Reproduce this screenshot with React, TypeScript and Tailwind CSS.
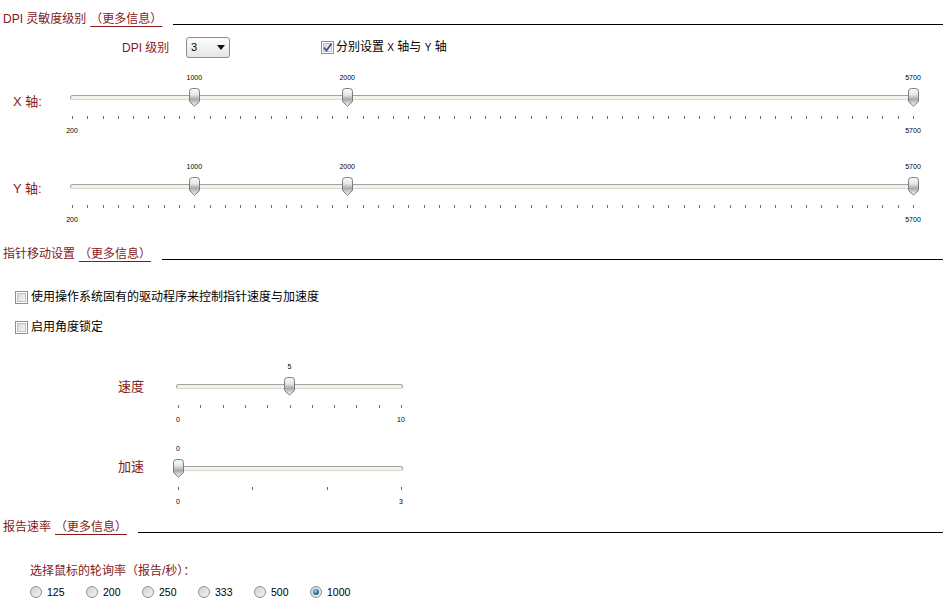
const RED = "text-[#861818]";

function Thumb({ left }: { left: number }) {
  return (
    <svg
      width="13"
      height="19"
      viewBox="0 0 13 19"
      className="absolute top-[16px]"
      style={{ left: left - 6.5 }}
    >
      <defs>
        <linearGradient id="thumbFill" x1="0" y1="0" x2="0" y2="1">
          <stop offset="0" stopColor="#fbfbfb" />
          <stop offset="0.35" stopColor="#e6e6e6" />
          <stop offset="0.62" stopColor="#a9a9ad" />
          <stop offset="0.85" stopColor="#dcdce0" />
          <stop offset="1" stopColor="#f4f4f4" />
        </linearGradient>
      </defs>
      <path
        d="M1.5 3.5 Q1.5 0.5 4.5 0.5 H8.5 Q11.5 0.5 11.5 3.5 V13.5 L6.5 18.2 L1.5 13.5 Z"
        fill="url(#thumbFill)"
        stroke="#7c7c80"
        strokeWidth="1"
      />
    </svg>
  );
}

function Slider({
  min,
  max,
  width,
  ticks,
  values,
  className,
}: {
  min: number;
  max: number;
  width: number;
  ticks: number;
  values: number[];
  className: string;
}) {
  const pos = (v: number) => ((v - min) / (max - min)) * width;
  return (
    <div className={"relative h-[64px] shrink-0 " + className}>
      {values.map((v) => (
        <span
          key={"l" + v}
          className="absolute top-[2px] -translate-x-1/2 text-[7px] leading-[8px] text-black"
          style={{ left: pos(v) }}
        >
          {v}
        </span>
      ))}
      <div className="absolute left-[-2px] right-[-2px] top-[23px] h-[5px] rounded-full border border-[#a3a3a3] border-b-[#d9d9d0] bg-[#f3f3ea]" />
      {values.map((v) => (
        <Thumb key={"t" + v} left={pos(v)} />
      ))}
      {Array.from({ length: ticks }).map((_, i) => (
        <div
          key={i}
          className="absolute top-[44px] h-[3px] w-px bg-[#6a6a6a]"
          style={{ left: (i / (ticks - 1)) * width }}
        />
      ))}
      <span className="absolute left-0 top-[55px] -translate-x-1/2 text-[7px] leading-[8px] text-black">
        {min}
      </span>
      <span
        className="absolute top-[55px] -translate-x-1/2 text-[7px] leading-[8px] text-black"
        style={{ left: width }}
      >
        {max}
      </span>
    </div>
  );
}

function SectionHeader({ title, className }: { title: string; className: string }) {
  return (
    <div className={"flex h-[16px] items-end pl-[3px] " + className}>
      <span className={"text-[12px] leading-[16px] " + RED}>{title}</span>
      <a
        href="#"
        className={"ml-[4px] text-[12px] leading-[16px] underline underline-offset-[3px] " + RED}
      >
        （更多信息）
      </a>
      <div className="mb-[2px] ml-[11px] h-px flex-1 bg-black" />
    </div>
  );
}

function Checkbox({ checked }: { checked?: boolean }) {
  return (
    <svg width="13" height="13" viewBox="0 0 13 13" className="shrink-0">
      <defs>
        <linearGradient id="cbFill" x1="0" y1="0" x2="1" y2="1">
          <stop offset="0" stopColor="#d6d6d6" />
          <stop offset="1" stopColor="#f7f7f7" />
        </linearGradient>
      </defs>
      <rect x="0.5" y="0.5" width="12" height="12" fill="#fff" stroke="#8f8f8f" />
      <rect x="2.5" y="2.5" width="8" height="8" fill="url(#cbFill)" stroke="#c2c2c2" />
      {checked && (
        <path d="M3 6.5 L5.5 9.5 L10.5 2.5" fill="none" stroke="#40569a" strokeWidth="1.8" />
      )}
    </svg>
  );
}

function Radio({ checked }: { checked?: boolean }) {
  return (
    <svg width="12" height="12" viewBox="0 0 12 12" className="shrink-0">
      <defs>
        <linearGradient id="rdFill" x1="0" y1="0" x2="1" y2="1">
          <stop offset="0" stopColor="#cfcfcf" />
          <stop offset="1" stopColor="#f6f6f6" />
        </linearGradient>
        <radialGradient id="rdDot" cx="0.4" cy="0.35" r="0.7">
          <stop offset="0" stopColor="#9fd6ef" />
          <stop offset="0.6" stopColor="#2d7fb0" />
          <stop offset="1" stopColor="#1a4d73" />
        </radialGradient>
      </defs>
      <circle cx="6" cy="6" r="5.5" fill="url(#rdFill)" stroke="#8e8f8f" />
      {checked && <circle cx="6" cy="6" r="3" fill="url(#rdDot)" />}
    </svg>
  );
}

export default function App() {
  return (
    <div
      className="h-[607px] w-[943px] overflow-hidden bg-white text-[12px] text-black"
      style={{ fontFamily: "'Liberation Sans', 'Noto Sans CJK SC', sans-serif" }}
    >
      <SectionHeader title="DPI 灵敏度级别" className="mt-[11px]" />

      <div className="mt-[10px] flex h-[21px] items-center">
        <span className={"ml-[122px] w-[64px] text-[12px] leading-[16px] " + RED}>DPI 级别</span>
        <div className="flex h-[21px] w-[44px] items-center justify-between rounded-[3px] border border-[#8e8e8e] bg-gradient-to-b from-[#fdfdfd] to-[#e6e6e6] pl-[4px] pr-[4px]">
          <span className="text-[11px]">3</span>
          <svg width="8" height="5" viewBox="0 0 8 5">
            <path d="M0 0 H8 L4 5 Z" fill="#111" />
          </svg>
        </div>
        <div className="ml-[91px] flex items-center gap-[2px]">
          <Checkbox checked />
          <span className="text-[12px] leading-[16px]">
            分别设置 <span className="text-[10px]">X</span> 轴与 <span className="text-[10px]">Y</span> 轴
          </span>
        </div>
      </div>

      <div className="mt-[14px] flex">
        <span className={"ml-[13px] mt-[22px] w-[59px] text-[13px] leading-[16px] " + RED}>X 轴:</span>
        <Slider min={200} max={5700} width={841} ticks={56} values={[1000, 2000, 5700]} className="w-[841px]" />
      </div>

      <div className="mt-[25px] flex">
        <span className={"ml-[13px] mt-[20px] w-[59px] text-[13px] leading-[16px] " + RED}>Y 轴:</span>
        <Slider min={200} max={5700} width={841} ticks={56} values={[1000, 2000, 5700]} className="w-[841px]" />
      </div>

      <SectionHeader title="指针移动设置" className="mt-[21px]" />

      <div className="ml-[15px] mt-[27px] flex h-[16px] items-center gap-[3px]">
        <Checkbox />
        <span className="leading-[16px]">使用操作系统固有的驱动程序来控制指针速度与加速度</span>
      </div>
      <div className="ml-[15px] mt-[14px] flex h-[16px] items-center gap-[3px]">
        <Checkbox />
        <span className="leading-[16px]">启用角度锁定</span>
      </div>

      <div className="mt-[26px] flex">
        <span className={"ml-[118px] mt-[18px] w-[60px] text-[13px] leading-[16px] " + RED}>速度</span>
        <Slider min={0} max={10} width={223} ticks={11} values={[5]} className="w-[223px]" />
      </div>

      <div className="mt-[18px] flex">
        <span className={"ml-[118px] mt-[16px] w-[60px] text-[13px] leading-[16px] " + RED}>加速</span>
        <Slider min={0} max={3} width={223} ticks={4} values={[0]} className="w-[223px]" />
      </div>

      <SectionHeader title="报告速率" className="mt-[12px]" />

      <div className={"ml-[30px] mt-[28px] h-[16px] leading-[16px] " + RED}>选择鼠标的轮询率（报告/秒）：</div>

      <div className="ml-[30px] mt-[5px] flex h-[16px] items-center">
        {[125, 200, 250, 333, 500, 1000].map((r) => (
          <label key={r} className="flex w-[56px] shrink-0 items-center gap-[5px]">
            <Radio checked={r === 1000} />
            <span className="text-[10.5px] leading-[16px]">{r}</span>
          </label>
        ))}
      </div>
    </div>
  );
}
